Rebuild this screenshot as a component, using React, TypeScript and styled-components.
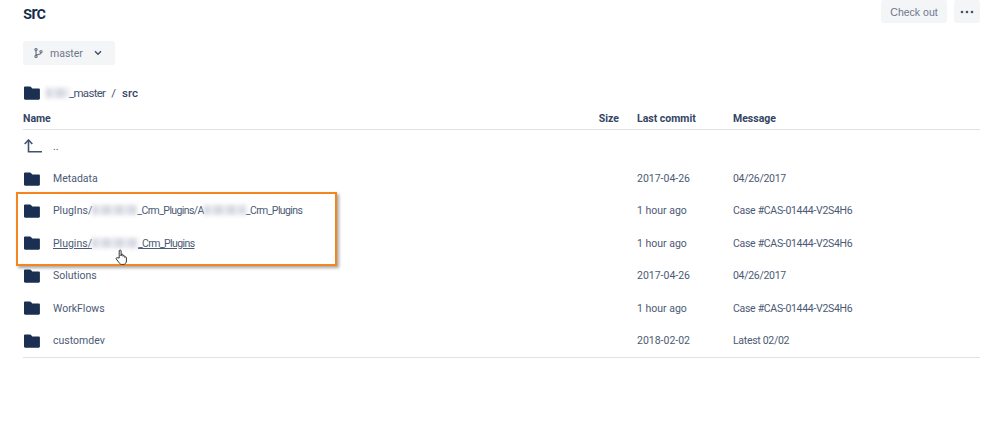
import React from "react";
import styled, { createGlobalStyle } from "styled-components";

const Global = createGlobalStyle`
  html, body { margin: 0; padding: 0; background: #fff; overflow: hidden; }
  body { font-family: Roboto, "Noto Sans", sans-serif; color: #42526e; }
`;

const Page = styled.div`
  position: relative;
  width: 998px;
  height: 427px;
  padding: 0 18px 0 23px;
  box-sizing: border-box;
  overflow: hidden;
`;

const Header = styled.header`
  display: flex;
  justify-content: space-between;
  align-items: flex-start;
  height: 38px;
`;

const Title = styled.h1`
  margin: 2px 0 0;
  font-size: 18px;
  line-height: 22px;
  font-weight: 500;
  letter-spacing: -1px;
  color: #172b4d;
`;

const Actions = styled.div`
  display: flex;
  gap: 7px;
`;

const ActionButton = styled.button<{ $w: number }>`
  height: 23px;
  width: ${(p) => p.$w}px;
  border: 0;
  padding: 0;
  border-radius: 3px;
  background: #f4f5f7;
  color: #6b778c;
  font-family: "Liberation Sans", Arial, sans-serif;
  font-size: 10.5px;
  display: flex;
  align-items: center;
  justify-content: center;
`;

const BranchButton = styled.button`
  display: flex;
  align-items: center;
  width: 92px;
  height: 24px;
  margin-top: 3px;
  padding: 0 0 0 11px;
  box-sizing: border-box;
  border: 0;
  border-radius: 3px;
  background: #f4f5f7;
  color: #6b778c;
  font-family: inherit;
  font-size: 10.5px;
`;

const BranchLabel = styled.span`
  margin: 0 11px 0 7px;
`;

const Breadcrumb = styled.nav`
  display: flex;
  align-items: center;
  height: 20px;
  margin-top: 18px;
  font-size: 11.5px;
  color: #42526e;
`;

const FolderSlot = styled.span<{ $w: number }>`
  display: flex;
  width: ${(p) => p.$w}px;
  flex: none;
  padding-left: 1px;
  box-sizing: border-box;
`;

const Blur = styled.span<{ $w: number }>`
  display: inline-block;
  width: ${(p) => p.$w}px;
  height: 10px;
  vertical-align: -1px;
  background: repeating-linear-gradient(90deg, #cfd0dc 0 5px, #e6e7ee 5px 9px, #d8d9e3 9px 13px);
  filter: blur(2px);
  opacity: 0.85;
`;

const MasterText = styled.span`
  letter-spacing: -0.7px;
`;

const Separator = styled.span`
  margin: 0 6px;
`;

const CurrentCrumb = styled.span`
  font-weight: 500;
  color: #344563;
`;

const Table = styled.div`
  position: relative;
  margin-top: 5px;
`;

const HeadRow = styled.div`
  display: grid;
  grid-template-columns: 1fr 40px 96px 247px;
  height: 22px;
  align-items: center;
  padding-bottom: 1px;
  box-sizing: border-box;
  border-bottom: 1.5px solid #dfe1e6;
  font-size: 10.5px;
  font-weight: 700;
  color: #344563;
`;

const HeadSize = styled.span`
  text-align: right;
  padding-right: 18px;
`;

const Row = styled.div`
  display: grid;
  grid-template-columns: 1fr 40px 96px 247px;
  height: 32.4px;
  align-items: center;
  font-size: 10.5px;
  color: #4c5a75;
`;

const NameCell = styled.div`
  display: flex;
  align-items: center;
  white-space: pre;
`;

const Name = styled.span<{ $link?: boolean }>`
  text-decoration: ${(p) => (p.$link ? "underline" : "none")};
`;

const PluginPart = styled.span`
  letter-spacing: -0.6px;
`;

const CommitCell = styled.span`
  grid-column: 3;
`;

const MessageCell = styled.span`
  letter-spacing: -0.3px;
`;

const Footer = styled.div`
  border-top: 1.5px solid #dfe1e6;
`;

const Highlight = styled.div`
  position: absolute;
  left: -7px;
  top: 84px;
  width: 321px;
  height: 74px;
  box-sizing: border-box;
  border: 2px solid #f5861f;
  box-shadow: 2px 2px 3px rgba(0, 0, 0, 0.35);
  pointer-events: none;
`;

const Hand = styled.svg`
  position: absolute;
  left: 92px;
  top: 141px;
`;

const Folder = () => (
  <svg width="16" height="14" viewBox="0 0 16 14">
    <path
      d="M1.2 0.4h4.6c.5 0 .9.2 1.2.6L8.3 2.4h6.4c.7 0 1.2.5 1.2 1.2v8.900c0 .7-.5 1.200-1.200 1.200H1.200C.5 13.700 0 13.200 0 12.500V1.600C0 .9.5.4 1.200.4z"
      fill="#1b2f52"
    />
  </svg>
);

const UpIcon = () => (
  <svg width="19" height="14" viewBox="0 0 19 14" fill="none" stroke="#42526e" strokeWidth="1.6">
    <path d="M0.7 5 4.500 1 8.300 5" />
    <path d="M4.500 1.200V12.700H18" />
  </svg>
);

const BranchIcon = () => (
  <svg width="9" height="10" viewBox="0 0 9 10" fill="none" stroke="#6b778c" strokeWidth="1.2">
    <circle cx="2" cy="1.600" r="1.100" />
    <circle cx="2" cy="8.400" r="1.100" />
    <circle cx="7" cy="3.600" r="1.100" />
    <path d="M2 2.800v4.400M7 4.800c0 1.800-3 1.600-5 2.400" />
  </svg>
);

const Chevron = () => (
  <svg width="8" height="6" viewBox="0 0 8 6" fill="none" stroke="#42526e" strokeWidth="1.5">
    <path d="M1 1.200 4 4.200 7 1.200" />
  </svg>
);

const Dots = () => (
  <svg width="14" height="4" viewBox="0 0 14 4" fill="#42526e">
    <circle cx="2" cy="2" r="1.300" />
    <circle cx="7" cy="2" r="1.300" />
    <circle cx="12" cy="2" r="1.300" />
  </svg>
);

type Entry = {
  name: React.ReactNode;
  commit?: string;
  message?: string;
  link?: boolean;
  up?: boolean;
};

const entries: Entry[] = [
  { name: "..", up: true },
  { name: "Metadata", commit: "2017-04-26", message: "04/26/2017" },
  {
    name: (
      <>
        PlugIns/<Blur $w={45} /><PluginPart>_Crm_Plugins/A</PluginPart><Blur $w={42} /><PluginPart>_Crm_Plugins</PluginPart>
      </>
    ),
    commit: "1 hour ago",
    message: "Case #CAS-01444-V2S4H6",
  },
  {
    name: (
      <>
        Plugins/<Blur $w={46} /><PluginPart>_Crm_Plugins</PluginPart>
      </>
    ),
    commit: "1 hour ago",
    message: "Case #CAS-01444-V2S4H6",
    link: true,
  },
  { name: "Solutions", commit: "2017-04-26", message: "04/26/2017" },
  { name: "WorkFlows", commit: "1 hour ago", message: "Case #CAS-01444-V2S4H6" },
  { name: "customdev", commit: "2018-02-02", message: "Latest 02/02" },
];

export default function App() {
  return (
    <Page>
      <Global />
      <Header>
        <Title>src</Title>
        <Actions>
          <ActionButton $w={66}>Check out</ActionButton>
          <ActionButton $w={26}>
            <Dots />
          </ActionButton>
        </Actions>
      </Header>
      <BranchButton>
        <BranchIcon />
        <BranchLabel>master</BranchLabel>
        <Chevron />
      </BranchButton>
      <Breadcrumb>
        <FolderSlot $w={23}>
          <Folder />
        </FolderSlot>
        <Blur $w={23} />
        <MasterText>_master</MasterText>
        <Separator>/</Separator>
        <CurrentCrumb>src</CurrentCrumb>
      </Breadcrumb>
      <Table>
        <HeadRow>
          <span>Name</span>
          <HeadSize>Size</HeadSize>
          <span>Last commit</span>
          <span>Message</span>
        </HeadRow>
        {entries.map((e, i) => (
          <Row key={i}>
            <NameCell>
              <FolderSlot $w={30}>{e.up ? <UpIcon /> : <Folder />}</FolderSlot>
              <Name $link={e.link}>{e.name}</Name>
            </NameCell>
            <CommitCell>{e.commit}</CommitCell>
            <MessageCell>{e.message}</MessageCell>
          </Row>
        ))}
        <Footer />
        <Highlight />
        <Hand width="14" height="17" viewBox="0 0 14 17" fill="#fff" stroke="#333" strokeWidth="1">
          <path d="M4.200 9V2c0-1.300 1.900-1.300 1.900 0v5l.1-1c0-1.200 1.800-1.200 1.800 0v1.300c0-1 1.700-1 1.700.1v1c.2-.9 1.700-.8 1.700.3v3.300c0 1.600-1 3.500-3.500 3.500H7.200c-1.500 0-2.400-.6-3.200-1.900L1.300 10c-.6-1 .8-2 1.600-1.100z" />
        </Hand>
      </Table>
    </Page>
  );
}
